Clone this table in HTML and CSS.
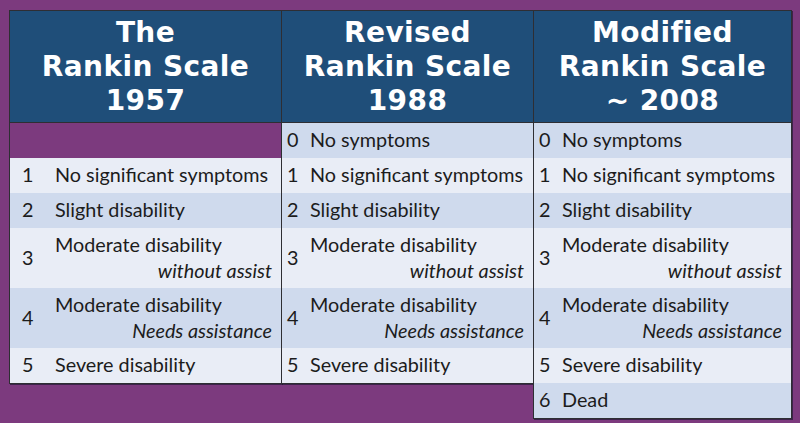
FILE: index.html
```html
<!DOCTYPE html>
<html>
<head>
<meta charset="utf-8">
<link rel="stylesheet" href="styles.css">
</head>
<body>
<div class="board">
  <div class="col col1">
    <div class="head">The<br>Rankin Scale<br>1957</div>
    <div class="spacer"></div>
    <div class="row light"><span class="num">1</span><span class="txt">No significant symptoms</span></div>
    <div class="row dark"><span class="num">2</span><span class="txt">Slight disability</span></div>
    <div class="row light tall"><span class="num">3</span><span class="txt">Moderate disability<em>without assist</em></span></div>
    <div class="row dark tall"><span class="num">4</span><span class="txt">Moderate disability<em>Needs assistance</em></span></div>
    <div class="row light"><span class="num">5</span><span class="txt">Severe disability</span></div>
  </div>
  <div class="col col2">
    <div class="head">Revised<br>Rankin Scale<br>1988</div>
    <div class="row dark"><span class="num">0</span><span class="txt">No symptoms</span></div>
    <div class="row light"><span class="num">1</span><span class="txt">No significant symptoms</span></div>
    <div class="row dark"><span class="num">2</span><span class="txt">Slight disability</span></div>
    <div class="row light tall"><span class="num">3</span><span class="txt">Moderate disability<em>without assist</em></span></div>
    <div class="row dark tall"><span class="num">4</span><span class="txt">Moderate disability<em>Needs assistance</em></span></div>
    <div class="row light"><span class="num">5</span><span class="txt">Severe disability</span></div>
  </div>
  <div class="col col3">
    <div class="head">Modified<br>Rankin Scale<br>~ 2008</div>
    <div class="row dark"><span class="num">0</span><span class="txt">No symptoms</span></div>
    <div class="row light"><span class="num">1</span><span class="txt">No significant symptoms</span></div>
    <div class="row dark"><span class="num">2</span><span class="txt">Slight disability</span></div>
    <div class="row light tall"><span class="num">3</span><span class="txt">Moderate disability<em>without assist</em></span></div>
    <div class="row dark tall"><span class="num">4</span><span class="txt">Moderate disability<em>Needs assistance</em></span></div>
    <div class="row light"><span class="num">5</span><span class="txt">Severe disability</span></div>
    <div class="row dark"><span class="num">6</span><span class="txt">Dead</span></div>
  </div>
</div>
</body>
</html>
```
FILE: styles.css
```css
html, body {
  margin: 0;
  padding: 0;
  background: #7c3a7e;
  width: 800px;
  height: 423px;
  overflow: hidden;
}
.board {
  display: flex;
  align-items: flex-start;
  padding: 10px 0 0 9px;
}
.col {
  box-sizing: border-box;
  border: 1px solid #2e2e33;
  box-shadow: 1px 1px 0 rgba(20,20,40,0.6);
  display: flex;
  flex-direction: column;
}
.col + .col { margin-left: -1px; }
.col1 { width: 273px; }
.col2 { width: 253px; }
.col3 { width: 259px; }
.head {
  box-sizing: border-box;
  height: 112px;
  background: #1f4e79;
  color: #fff;
  font-family: "DejaVu Sans", Verdana, sans-serif;
  font-weight: bold;
  font-size: 28px;
  letter-spacing: 0.4px;
  line-height: 34px;
  text-align: center;
  display: flex;
  align-items: center;
  justify-content: center;
  border-bottom: 1px solid #2e2e33;
}
.spacer {
  height: 35px;
  background: #7c3a7e;
}
.row {
  box-sizing: border-box;
  display: grid;
  grid-template-columns: 28px 1fr;
  align-items: center;
  height: 35px;
  padding-bottom: 3px;
  font-family: "Lato", "Open Sans", sans-serif;
  font-size: 19.8px;
  color: #1c1c1c;
}
.col1 .row { grid-template-columns: 45px 1fr; }
.row.tall { height: 60px; }
.dark { background: #cfdaed; }
.light { background: #e9edf6; }
.num { padding-left: 5px; }
.col1 .num { padding-left: 12px; }
.txt {
  display: flex;
  flex-direction: column;
  line-height: 26px;
  padding-right: 9px;
}
.txt em {
  align-self: flex-end;
  font-style: italic;
}
```
